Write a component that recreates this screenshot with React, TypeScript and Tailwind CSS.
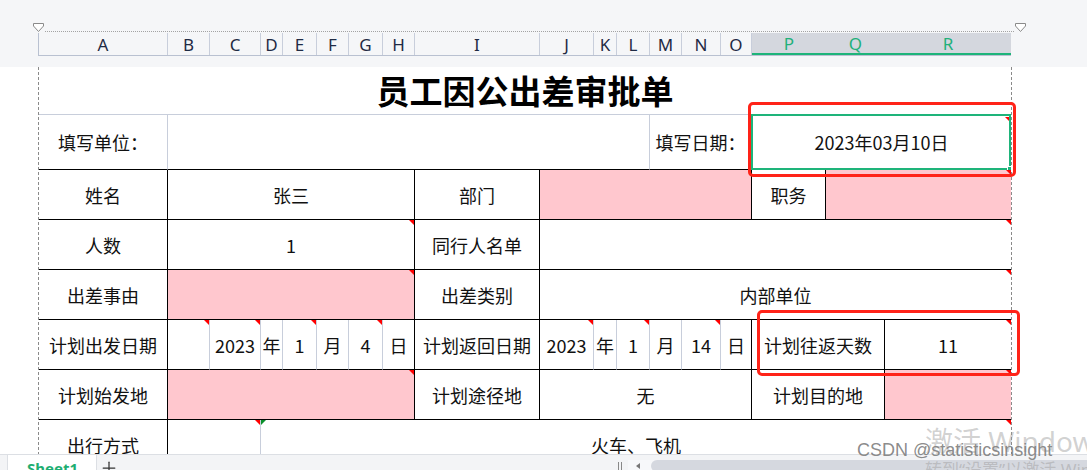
import { Plus } from "lucide-react";

// same column widths for the letter header and the sheet grid
const cols =
  "grid-cols-[129px_42px_51px_22px_34px_32px_34px_32px_125px_54px_23px_33px_32px_39px_31px_74px_59px_126px]";

const letters = ["A", "B", "C", "D", "E", "F", "G", "H", "I", "J", "K", "L", "M", "N", "O"];

function RedMark() {
  return (
    <span className="absolute right-0 top-0 h-0 w-0 border-l-[5px] border-t-[5px] border-l-transparent border-t-[#ff0000]" />
  );
}

function Cell({
  className = "",
  children,
  mark = false,
}: {
  className?: string;
  children?: React.ReactNode;
  mark?: boolean;
}) {
  return (
    <div
      className={`relative flex items-center justify-center border-b border-b-black leading-none text-[#111] ${className}`}
    >
      {children}
      {mark && <RedMark />}
    </div>
  );
}

function Triangle() {
  return (
    <svg width="13" height="11" viewBox="0 0 13 11" className="shrink-0">
      <path d="M1.5 1.5 H11.5 V4 L6.5 9.5 L1.5 4 Z" fill="#fff" stroke="#8a8a8a" strokeWidth="1" />
    </svg>
  );
}

export default function App() {
  const bk = "border-r border-r-black";
  const gr = "border-r border-r-[#c8cedb]";
  const pink = "bg-[#ffc7ce]";

  return (
    <div className="relative flex h-[470px] w-[1087px] flex-col overflow-hidden bg-white font-['Noto_Sans_CJK_SC',sans-serif] text-[18px]">
      {/* top strip: ruler + column letters */}
      <div className="shrink-0 bg-[#f5f6f8]">
        <div className="flex h-[33px] items-end pl-[32px] pr-[60px]">
          <Triangle />
          <div className="mb-[1px] flex-1 border-b border-dotted border-[#a3a3a3]" />
          <Triangle />
        </div>
        <div className={`ml-[38px] grid h-[23px] w-[973px] border-b border-l border-[#b9c1d1] ${cols} font-['Noto_Sans',sans-serif] text-[17px] leading-none`}>
          {letters.map((l) => (
            <div key={l} className="flex items-center justify-center border-r border-r-[#c8cedb] text-[#1f2a44]">
              {l}
            </div>
          ))}
          <div className="flex items-center justify-center border-b-2 border-b-[#1eb47a] bg-[#d4d7de] text-[#22b07a]">P</div>
          <div className="flex items-center justify-center border-b-2 border-b-[#1eb47a] bg-[#d4d7de] text-[#22b07a]">Q</div>
          <div className="flex items-center justify-center border-b-2 border-b-[#1eb47a] bg-[#d4d7de] text-[#22b07a]">R</div>
        </div>
        <div className="h-[11px]" />
      </div>

      {/* sheet */}
      <div className="min-h-0 flex-1 overflow-hidden">
        <div className={`ml-[38px] grid w-[974px] border-x border-dashed border-[#8a8a8a] ${cols} grid-rows-[48px_55px_50px_50px_50px_50px_50px_50px]`}>
          {/* title */}
          <div className="col-span-18 flex items-center justify-center border-b border-b-[#c8cedb] text-[33px] font-bold leading-none text-black">
            员工因公出差审批单
          </div>

          {/* row 1 */}
          <Cell className={gr}>填写单位：</Cell>
          <Cell className={`col-span-11 ${gr}`} />
          <Cell className={`col-span-3 ${gr}`}>填写日期：</Cell>
          <Cell className="col-span-3">
            2023年03月10日
            <span className="absolute bottom-[-1px] left-[-1px] right-0 top-[-1px] border-2 border-[#1eb47a]" />
            <span className="absolute right-[2px] top-[2px] h-0 w-0 border-l-[4px] border-t-[4px] border-l-transparent border-t-[#ff0000]" />
            <span className="absolute bottom-[-2px] right-[-1px] h-[5px] w-[5px] border border-white bg-[#1eb47a]" />
          </Cell>

          {/* row 2 */}
          <Cell className={bk}>姓名</Cell>
          <Cell className={`col-span-7 ${bk}`}>张三</Cell>
          <Cell className={bk}>部门</Cell>
          <Cell className={`col-span-6 ${bk} ${pink}`} />
          <Cell className={bk}>职务</Cell>
          <Cell className={`col-span-2 ${pink}`} mark />

          {/* row 3 */}
          <Cell className={bk}>人数</Cell>
          <Cell className={`col-span-7 ${bk}`} mark>
            1
          </Cell>
          <Cell className={bk}>同行人名单</Cell>
          <Cell className="col-span-9" mark />

          {/* row 4 */}
          <Cell className={bk}>出差事由</Cell>
          <Cell className={`col-span-7 ${bk} ${pink}`} mark />
          <Cell className={bk}>出差类别</Cell>
          <Cell className="col-span-9" mark>
            内部单位
          </Cell>

          {/* row 5 */}
          <Cell className={bk}>计划出发日期</Cell>
          <Cell className={gr} mark />
          <Cell className={gr} mark>
            2023
          </Cell>
          <Cell className={gr}>年</Cell>
          <Cell className={gr} mark>
            1
          </Cell>
          <Cell className={gr}>月</Cell>
          <Cell className={gr} mark>
            4
          </Cell>
          <Cell className={bk}>日</Cell>
          <Cell className={bk}>计划返回日期</Cell>
          <Cell className={gr} mark>
            2023
          </Cell>
          <Cell className={gr}>年</Cell>
          <Cell className={gr} mark>
            1
          </Cell>
          <Cell className={gr}>月</Cell>
          <Cell className={gr} mark>
            14
          </Cell>
          <Cell className={bk}>日</Cell>
          <Cell className={`col-span-2 ${bk}`}>计划往返天数</Cell>
          <Cell mark>11</Cell>

          {/* row 6 */}
          <Cell className={bk}>计划始发地</Cell>
          <Cell className={`col-span-7 ${bk} ${pink}`} mark />
          <Cell className={bk}>计划途径地</Cell>
          <Cell className={`col-span-6 ${bk} text-[#4a3f35]`}>无</Cell>
          <Cell className={`col-span-2 ${bk}`}>计划目的地</Cell>
          <Cell className={pink} mark />

          {/* row 7 */}
          <Cell className={bk}>出行方式</Cell>
          <Cell className={`col-span-2 ${gr}`} mark />
          <Cell className="col-span-15" mark>
            火车、飞机
            <span className="absolute left-0 top-0 h-0 w-0 border-r-[5px] border-t-[5px] border-r-transparent border-t-[#0a8f2a]" />
          </Cell>
        </div>
      </div>

      {/* sheet tabs + scrollbar */}
      <div className="flex h-[16px] shrink-0 items-start border-t border-[#dcdfe4] bg-[#f3f4f6]">
        <div className="flex w-[616px] shrink-0 items-start">
          <div className="w-[7px]" />
          <div className="h-[16px] w-[90px] border-x border-[#dcdfe4] bg-white pl-[19px] pt-[6px] font-['Noto_Sans',sans-serif] text-[15px] font-bold leading-none text-[#1eae72]">
            Sheet1
          </div>
          <Plus size={20} strokeWidth={1.5} className="ml-[2px] mt-[3px] text-[#333]" />
        </div>
        <div className="mt-[7px] flex h-[10px] w-[8px] shrink-0 gap-[2px] pl-[2px]">
          <span className="h-full w-px bg-[#888]" />
          <span className="h-full w-px bg-[#888]" />
        </div>
        <div className="ml-[4px] mt-[5px] flex h-[12px] flex-1 items-center bg-[#f7f8fa]">
          <span className="ml-[8px] h-0 w-0 border-y-[3px] border-r-[4px] border-y-transparent border-r-[#777]" />
          <span className="ml-[11px] h-[12px] flex-1 rounded-l-full bg-[#d5d8df]" />
        </div>
      </div>

      {/* red call-out boxes */}
      <div className="pointer-events-none absolute left-[748px] top-[102px] h-[75px] w-[268px] rounded-[5px] border-[3px] border-[#ff2318]" />
      <div className="pointer-events-none absolute left-[757px] top-[310px] h-[66px] w-[263px] rounded-[5px] border-[3px] border-[#ff2318]" />

      {/* watermarks */}
      <div className="pointer-events-none absolute left-[925px] top-[427px] whitespace-nowrap font-['Noto_Sans','Noto_Sans_CJK_SC',sans-serif] text-[28px] leading-none text-[#9a9a9a]/45">
        激活 Windows
      </div>
      <div className="pointer-events-none absolute left-[925px] top-[461px] whitespace-nowrap font-['Noto_Sans','Noto_Sans_CJK_SC',sans-serif] text-[17px] leading-none text-[#9a9a9a]/45">
        转到“设置”以激活 Windows。
      </div>
      <div className="pointer-events-none absolute left-[857px] top-[441px] whitespace-nowrap font-['Liberation_Sans',sans-serif] text-[18px] leading-[18px] text-[#7d7d7d]/90">
        CSDN @statisticsinsight
      </div>
    </div>
  );
}
